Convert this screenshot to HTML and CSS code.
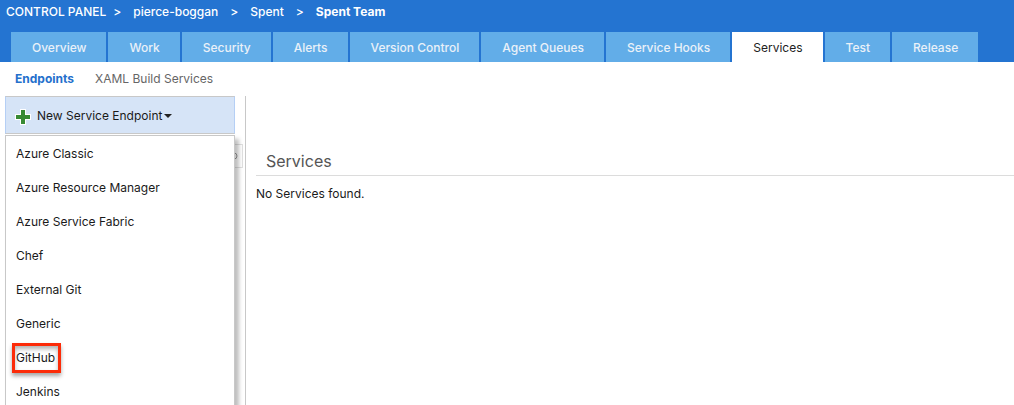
FILE: index.html
```html
<!DOCTYPE html>
<html lang="en">
<head>
<meta charset="utf-8">
<meta name="viewport" content="width=device-width, initial-scale=1">
<title>Services - Control Panel</title>
<link rel="stylesheet" href="styles.css">
</head>
<body>
<header class="header">
  <nav class="crumbs" aria-label="Breadcrumb">
    <a class="crumb-root" href="#">CONTROL PANEL</a><span class="sep first">&gt;</span>
    <a href="#">pierce-boggan</a><span class="sep">&gt;</span>
    <a href="#">Spent</a><span class="sep">&gt;</span>
    <a class="crumb-current" href="#">Spent Team</a>
  </nav>
  <nav class="tabs" aria-label="Hubs">
    <a class="tab" href="#">Overview</a>
    <a class="tab" href="#">Work</a>
    <a class="tab" href="#">Security</a>
    <a class="tab" href="#">Alerts</a>
    <a class="tab" href="#">Version Control</a>
    <a class="tab" href="#">Agent Queues</a>
    <a class="tab" href="#">Service Hooks</a>
    <a class="tab active" href="#" aria-current="page">Services</a>
    <a class="tab" href="#">Test</a>
    <a class="tab" href="#">Release</a>
  </nav>
</header>
<nav class="subnav" aria-label="Services">
  <a class="selected" href="#">Endpoints</a>
  <a href="#">XAML Build Services</a>
</nav>
<div class="workspace">
  <aside class="sidebar">
    <button class="new-endpoint" type="button" aria-haspopup="menu" aria-expanded="true">
      <svg class="plus" viewBox="0 0 16 16" aria-hidden="true"><path d="M5 0h6v5h5v6h-5v5H5v-5H0V5h5z" fill="#fff"/><path d="M6 1h4v5h5v4h-5v5H6v-5H1V6h5z" fill="#388a34"/></svg>
      <span>New Service Endpoint</span>
      <svg class="caret" viewBox="0 0 8 4" aria-hidden="true"><path d="M0 0h8L4 4z" fill="#222"/></svg>
    </button>
    <div class="search">
      <input type="text" aria-label="Search endpoints">
      <svg viewBox="0 0 12 12" aria-hidden="true"><circle cx="8" cy="6" r="3" fill="none" stroke="#999"/><path d="M6 8l-4 4" stroke="#999"/></svg>
    </div>
    <div class="menu" role="menu">
      <button type="button" role="menuitem"><span>Azure Classic</span></button>
      <button type="button" role="menuitem"><span>Azure Resource Manager</span></button>
      <button type="button" role="menuitem"><span>Azure Service Fabric</span></button>
      <button type="button" role="menuitem"><span>Chef</span></button>
      <button type="button" role="menuitem"><span>External Git</span></button>
      <button type="button" role="menuitem"><span>Generic</span></button>
      <button type="button" role="menuitem"><span class="marked">GitHub</span></button>
      <button type="button" role="menuitem"><span>Jenkins</span></button>
    </div>
  </aside>
  <main class="content">
    <h1>Services</h1>
    <p>No Services found.</p>
  </main>
</div>
</body>
</html>
```
FILE: styles.css
```css
* { box-sizing: border-box; }
body {
  margin: 0;
  height: 100vh;
  overflow: hidden;
  display: flex;
  flex-direction: column;
  background: #fff;
  color: #1a1a1a;
  font: 12px/16px Inter, "Liberation Sans", sans-serif;
}
a { color: inherit; text-decoration: none; }
button, input { font: inherit; color: inherit; }

.header { background: #2474d1; color: #fff; }
.crumbs {
  display: flex;
  height: 32px;
  padding: 4px 6px;
  font-weight: 500;
  white-space: nowrap;
}
.sep { margin: 0 12px; }
.sep.first { margin-left: 7px; }
.crumb-current { font-weight: 700; }
.tabs { display: flex; gap: 2px; padding-left: 11px; }
.tab {
  padding: 8px 20px 6px 21px;
  background: #62ade8;
  color: #eaf1f8;
  font-weight: 500;
  white-space: nowrap;
}
.tab.active { background: #fff; color: #222; font-weight: 400; }

.subnav {
  display: flex;
  gap: 21px;
  padding: 9px 15px;
  color: #666;
}
.subnav .selected { color: #2470cc; font-weight: 700; }

.workspace { display: flex; flex: 1; min-height: 0; }
.sidebar {
  position: relative;
  flex: 0 0 246px;
  padding-left: 5px;
  border-right: 1px solid #c8c8c8;
}
.new-endpoint {
  display: flex;
  align-items: center;
  width: 230px;
  height: 38px;
  padding: 2px 9px 0;
  border: 1px solid #b5cff5;
  border-top-color: #c8c8c8;
  border-bottom-color: #c8c8c8;
  background: #d6e4f7;
}
.plus { width: 16px; height: 16px; margin: 2px 6px 0 0; }
.caret { width: 8px; height: 4px; margin-left: 2px; }
.search {
  display: flex;
  align-items: center;
  height: 24px;
  margin: 10px 2px 0 0;
  border: 1px solid #e0e0e0;
}
.search input { flex: 1; min-width: 0; border: 0; outline: 0; }
.search svg { width: 12px; height: 12px; margin-right: 4px; }
.menu {
  position: absolute;
  top: 39px;
  left: 5px;
  width: 230px;
  padding: 1px 0;
  border: 1px solid #c8c8c8;
  background: #fff;
  box-shadow: 4px 4px 4px rgba(0, 0, 0, .25);
}
.menu button {
  display: block;
  width: 100%;
  height: 34px;
  padding: 0 10px;
  border: 0;
  background: none;
  text-align: left;
}
.menu .marked {
  display: inline-block;
  margin-left: -4px;
  padding: 4px 3px 4px 1px;
  border: 3px solid #fc2b08;
  box-shadow: 0 3px 4px rgba(0, 0, 0, .35), inset 0 3px 4px rgba(0, 0, 0, .3);
}

.content { flex: 1; min-width: 0; padding: 55px 0 0 10px; }
h1 {
  margin: 0;
  padding: 0 10px 4px;
  border-bottom: 1px solid #dcdcdc;
  color: #555;
  font-size: 16px;
  font-weight: 400;
  line-height: 20px;
}
p { margin: 10px 0 0; }
```
